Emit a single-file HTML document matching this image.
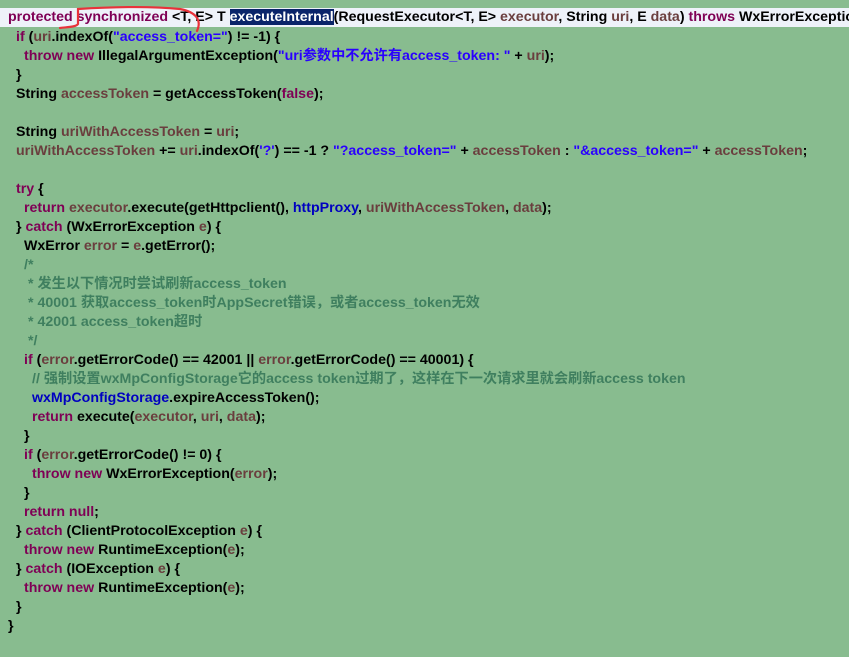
<!DOCTYPE html>
<html><head><meta charset="utf-8"><style>
html,body{margin:0;padding:0;}
body{width:849px;height:657px;background:#88bc8f;position:relative;overflow:hidden;
font-family:"Liberation Sans","Noto Sans CJK SC",sans-serif;font-weight:bold;font-size:14.2px;color:#000;}
.l{position:absolute;height:19px;line-height:19px;white-space:nowrap;margin-top:1px;}
.k{color:#7f0055}.v{color:#6a3e3e}.s{color:#2a00ff}.c{color:#3f7f5f}.f{color:#0000c0}
.hl{background:#0a246a;color:#fff}
#top{position:absolute;left:0;top:8px;width:849px;height:19px;background:#eef2f9;}
</style></head><body>
<div id="top"></div>
<div class="l" style="top:8px;left:8px;margin-top:0"><span class="k">protected synchronized</span> &lt;T, E&gt; T <span class="hl">executeInternal</span>(RequestExecutor&lt;T, E&gt; <span class="v">executor</span>, String <span class="v">uri</span>, E <span class="v">data</span>) <span class="k">throws</span> WxErrorException {</div>
<div class="l" style="top:27px;left:16px"><span class="k">if</span> (<span class="v">uri</span>.indexOf(<span class="s">"access_token="</span>) != -1) {</div>
<div class="l" style="top:46px;left:24px"><span class="k">throw new</span> IllegalArgumentException(<span class="s">"uri参数中不允许有access_token: "</span> + <span class="v">uri</span>);</div>
<div class="l" style="top:65px;left:16px">}</div>
<div class="l" style="top:84px;left:16px">String <span class="v">accessToken</span> = getAccessToken(<span class="k">false</span>);</div>
<div class="l" style="top:122px;left:16px">String <span class="v">uriWithAccessToken</span> = <span class="v">uri</span>;</div>
<div class="l" style="top:141px;left:16px"><span class="v">uriWithAccessToken</span> += <span class="v">uri</span>.indexOf(<span class="s">'?'</span>) == -1 ? <span class="s">"?access_token="</span> + <span class="v">accessToken</span> : <span class="s">"&amp;access_token="</span> + <span class="v">accessToken</span>;</div>
<div class="l" style="top:179px;left:16px"><span class="k">try</span> {</div>
<div class="l" style="top:198px;left:24px"><span class="k">return</span> <span class="v">executor</span>.execute(getHttpclient(), <span class="f">httpProxy</span>, <span class="v">uriWithAccessToken</span>, <span class="v">data</span>);</div>
<div class="l" style="top:217px;left:16px">} <span class="k">catch</span> (WxErrorException <span class="v">e</span>) {</div>
<div class="l" style="top:236px;left:24px">WxError <span class="v">error</span> = <span class="v">e</span>.getError();</div>
<div class="l c" style="top:255px;left:24px">/*</div>
<div class="l c" style="top:274px;left:28px">* 发生以下情况时尝试刷新access_token</div>
<div class="l c" style="top:293px;left:28px">* 40001 获取access_token时AppSecret错误，或者access_token无效</div>
<div class="l c" style="top:312px;left:28px">* 42001 access_token超时</div>
<div class="l c" style="top:331px;left:28px">*/</div>
<div class="l" style="top:350px;left:24px"><span class="k">if</span> (<span class="v">error</span>.getErrorCode() == 42001 || <span class="v">error</span>.getErrorCode() == 40001) {</div>
<div class="l c" style="top:369px;left:32px">// 强制设置wxMpConfigStorage它的access token过期了，这样在下一次请求里就会刷新access token</div>
<div class="l" style="top:388px;left:32px"><span class="f">wxMpConfigStorage</span>.expireAccessToken();</div>
<div class="l" style="top:407px;left:32px"><span class="k">return</span> execute(<span class="v">executor</span>, <span class="v">uri</span>, <span class="v">data</span>);</div>
<div class="l" style="top:426px;left:24px">}</div>
<div class="l" style="top:445px;left:24px"><span class="k">if</span> (<span class="v">error</span>.getErrorCode() != 0) {</div>
<div class="l" style="top:464px;left:32px"><span class="k">throw new</span> WxErrorException(<span class="v">error</span>);</div>
<div class="l" style="top:483px;left:24px">}</div>
<div class="l" style="top:502px;left:24px"><span class="k">return null</span>;</div>
<div class="l" style="top:521px;left:16px">} <span class="k">catch</span> (ClientProtocolException <span class="v">e</span>) {</div>
<div class="l" style="top:540px;left:24px"><span class="k">throw new</span> RuntimeException(<span class="v">e</span>);</div>
<div class="l" style="top:559px;left:16px">} <span class="k">catch</span> (IOException <span class="v">e</span>) {</div>
<div class="l" style="top:578px;left:24px"><span class="k">throw new</span> RuntimeException(<span class="v">e</span>);</div>
<div class="l" style="top:597px;left:16px">}</div>
<div class="l" style="top:616px;left:8px">}</div>
<svg width="849" height="657" style="position:absolute;left:0;top:0" fill="none" stroke="#e8323a" stroke-width="2.2" stroke-linecap="round">
<path d="M60 28 C68 27 76 27 78 24 L78 9 C110 7 150 6 180 9 C196 12 202 20 197 31"/>
</svg>
</body></html>
